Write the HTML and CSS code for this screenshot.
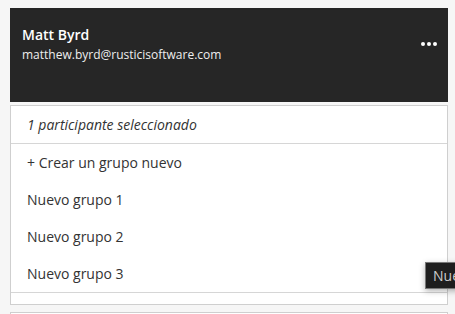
FILE: index.html
```html
<!DOCTYPE html>
<html lang="es">
<head>
    <meta charset="UTF-8">
    <title>Participantes</title>
    <link rel="stylesheet" href="styles.css">
</head>
<body>
    <div class="page">
        <div class="user-card">
            <div class="user-info">
                <div class="user-name">Matt Byrd</div>
                <div class="user-email">matthew.byrd@rusticisoftware.com</div>
            </div>
            <div class="more">
                <span class="dot"></span><span class="dot"></span><span class="dot"></span>
            </div>
        </div>

        <div class="dropdown">
            <div class="dropdown-head">1 participante seleccionado</div>
            <ul class="group-list">
                <li>+ Crear un grupo nuevo</li>
                <li>Nuevo grupo 1</li>
                <li>Nuevo grupo 2</li>
                <li>Nuevo grupo 3</li>
            </ul>
            <div class="dropdown-foot"></div>
        </div>

        <div class="next-box"></div>
    </div>

    <div class="tooltip">Nuevo grupo 3</div>
</body>
</html>
```

FILE: styles.css
```css
html, body {
    margin: 0;
    overflow: hidden;
}
body {
    font-family: 'Open Sans', 'Noto Sans', sans-serif;
    background: #f6f6f6;
    color: #333;
    width: 455px;
    height: 314px;
}
.page {
    padding: 8px 7px 0 10px;
}
.user-card {
    background: #262626;
    color: #fff;
    height: 94px;
    box-sizing: border-box;
    padding: 17px 11px 0 12px;
    display: flex;
    justify-content: space-between;
}
.user-name {
    font-size: 14px;
    font-weight: 600;
    line-height: 20px;
}
.user-email {
    font-size: 12px;
    line-height: 20px;
    color: #eee;
}
.more {
    display: flex;
    gap: 2px;
    margin-top: 17px;
}
.dot {
    width: 4px;
    height: 4px;
    border-radius: 50%;
    background: #fff;
}
.dropdown {
    margin-top: 3px;
    background: #fff;
    border: 1px solid #cfcfcf;
}
.dropdown-head {
    height: 37px;
    line-height: 37px;
    padding-left: 16px;
    font-size: 14px;
    font-style: italic;
    border-bottom: 1px solid #d6d6d6;
}
.group-list {
    list-style: none;
    margin: 0;
    padding: 0;
}
.group-list li {
    height: 37px;
    line-height: 37px;
    padding-left: 16px;
    font-size: 14px;
}
.dropdown-foot {
    height: 11px;
    border-top: 1px solid #d6d6d6;
}
.next-box {
    margin-top: 7px;
    height: 1px;
    background: #fff;
    border: 1px solid #cfcfcf;
    border-bottom: 0;
}
.tooltip {
    position: absolute;
    left: 425px;
    top: 262px;
    height: 25px;
    line-height: 25px;
    padding: 0 7px;
    background: #1e1e1e;
    color: #ccc;
    font-size: 14px;
    border: 1px solid #777;
    white-space: nowrap;
    box-shadow: 0 2px 6px rgba(0,0,0,0.3);
}
```
